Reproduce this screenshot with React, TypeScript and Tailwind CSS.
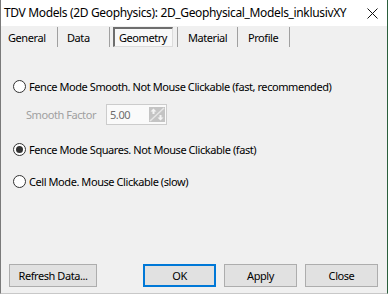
import React from 'react';

const tabs = [
  { label: 'General', w: 'w-[57px]', pl: 'pl-[7px]' },
  { label: 'Data', w: 'w-[52px]', pl: 'pl-[9px]' },
  { label: 'Geometry', w: 'w-[68px]', pl: '' },
  { label: 'Material', w: 'w-[60px]', pl: 'pl-[10px]' },
  { label: 'Profile', w: 'w-[52px]', pl: 'pl-[10px]' },
];

const Radio: React.FC<{ checked?: boolean; label: string }> = ({ checked, label }) => (
  <div className="flex items-center gap-[3px] h-[13px]">
    <div className="w-[13px] h-[13px] rounded-full border border-[#333333] bg-white flex items-center justify-center shrink-0">
      {checked && <div className="w-[7px] h-[7px] rounded-full bg-[#333333]" />}
    </div>
    <span className="leading-none text-black whitespace-nowrap">{label}</span>
  </div>
);

const SpinIcon = () => (
  <svg width="16" height="15" viewBox="0 0 16 15" className="shrink-0">
    <rect x="0" y="0" width="16" height="15" fill="#c4c4c4" />
    <line x1="1" y1="14" x2="15" y2="1" stroke="#e6e6e6" strokeWidth="1.5" />
    <path d="M4.5 1.5 L1.5 4.5 H3.5 V7 H5.5 V4.5 H7.5 Z" fill="#f4f4f4" />
    <path d="M11.5 13.5 L8.5 10.5 H10.5 V8 H12.5 V10.5 H14.5 Z" fill="#f4f4f4" />
  </svg>
);

const Button: React.FC<{ label: string; w: string; primary?: boolean }> = ({ label, w, primary }) => (
  <div
    className={`${w} h-[23px] flex items-center justify-center bg-[#e1e1e1] ${
      primary ? 'border-2 border-[#0078d7]' : 'border border-[#adadad]'
    }`}
  >
    <span className="leading-none text-black">{label}</span>
  </div>
);

export default function App() {
  return (
    <div className="w-[388px] h-[294px] bg-[#f0f0f0] flex flex-col border-l border-l-[#7a7a7a] border-r border-r-[#2b5e3c] border-b border-b-[#c8c8c8] font-['Noto_Sans',sans-serif] text-[11px] tracking-[-0.43px] overflow-hidden">
      {/* title bar */}
      <div className="h-[26px] bg-white flex items-center justify-between pl-[3px] pr-[9px] shrink-0">
        <span className="text-[12px] tracking-[-0.35px] text-black leading-none whitespace-nowrap">
          TDV Models (2D Geophysics): 2D_Geophysical_Models_inklusivXY
        </span>
        <svg width="11" height="11" viewBox="0 0 11 11">
          <path d="M0.5 0.5 L10.5 10.5 M10.5 0.5 L0.5 10.5" stroke="#111111" strokeWidth="1" />
        </svg>
      </div>

      {/* tabs */}
      <div className="flex h-[20px] mt-[1px] shrink-0">
        {tabs.map((t) =>
          t.label === 'Geometry' ? (
            <div key={t.label} className={`${t.w} h-full border-r border-[#a0a0a0] pl-[3px]`}>
              <div className="w-[60px] h-[20px] bg-[#f8f8f8] border-t-2 border-l-2 border-t-[#6e6e6e] border-l-[#6e6e6e] border-r border-b border-r-[#dcdcdc] border-b-[#dcdcdc] flex items-center pl-[4px]">
                <span className="leading-none text-black">{t.label}</span>
              </div>
            </div>
          ) : (
            <div key={t.label} className={`${t.w} ${t.pl} h-full border-r border-[#a0a0a0] flex items-center`}>
              <span className="leading-none text-black">{t.label}</span>
            </div>
          )
        )}
      </div>

      {/* options */}
      <div className="flex flex-col pl-[12px]">
        <div className="mt-[33px]">
          <Radio label="Fence Mode Smooth. Not Mouse Clickable (fast, recommended)" />
        </div>
        <div className="mt-[11px] flex items-center pl-[13px]">
          <span className="w-[80px] text-[#a0a0a0] leading-none">Smooth Factor</span>
          <div className="w-[61px] h-[21px] bg-[#fafafa] border border-[#cccccc] flex items-center justify-between pl-[3px] pr-[1px]">
            <span className="text-[#6d6d6d] leading-none">5.00</span>
            <SpinIcon />
          </div>
        </div>
        <div className="mt-[18px]">
          <Radio checked label="Fence Mode Squares. Not Mouse Clickable (fast)" />
        </div>
        <div className="mt-[19px]">
          <Radio label="Cell Mode. Mouse Clickable (slow)" />
        </div>
      </div>

      <div className="flex-1" />

      {/* buttons */}
      <div className="flex items-center pl-[8px] pr-[9px] pb-[6px] shrink-0">
        <Button label="Refresh Data..." w="w-[88px]" />
        <div className="ml-auto flex gap-[8px]">
          <Button label="OK" w="w-[73px]" primary />
          <Button label="Apply" w="w-[73px]" />
          <Button label="Close" w="w-[73px]" />
        </div>
      </div>
    </div>
  );
}
